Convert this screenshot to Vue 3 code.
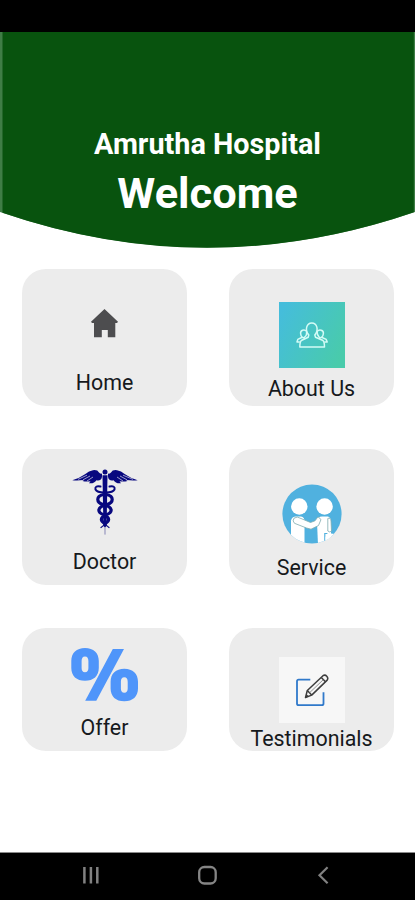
<script setup>
const items = [
  { id: 'home', label: 'Home' },
  { id: 'about', label: 'About Us' },
  { id: 'doctor', label: 'Doctor' },
  { id: 'service', label: 'Service' },
  { id: 'offer', label: 'Offer' },
  { id: 'testimonials', label: 'Testimonials' }
]
</script>

<template>
  <div class="screen">
    <div class="status"></div>
    <header class="hero">
      <svg class="hero-bg" viewBox="0 0 415 216" preserveAspectRatio="none">
        <path d="M0 0H415V180Q207.5 251 0 180Z" fill="#3f7d46" />
        <path d="M2.5 0H413.8V180.2Q207.5 251 2.5 180.7Z" fill="#08530e" />
      </svg>
      <p class="hospital">Amrutha Hospital</p>
      <h1 class="welcome">Welcome</h1>
    </header>

    <main class="grid">
      <button v-for="item in items" :key="item.id" class="card" :class="item.id">
        <svg v-if="item.id === 'home'" class="icon" viewBox="0 0 66 66">
          <path d="M32.5 19 46 31.7 45 33H43.3V47.2H35.8V40H29.8V47.2H22V33H20L19 31.7Z" fill="#4d4d4f" />
        </svg>

        <svg v-else-if="item.id === 'about'" class="icon" viewBox="0 0 66 66">
          <defs>
            <linearGradient id="teal" x1="0" y1="0.2" x2="1" y2="0.7">
              <stop offset="0" stop-color="#45bddb" />
              <stop offset="1" stop-color="#49cbab" />
            </linearGradient>
          </defs>
          <rect width="66" height="66" fill="url(#teal)" />
          <g fill="none" stroke="#d4fbf6" stroke-width="1.5" stroke-linejoin="round" stroke-linecap="round">
            <path d="M29.8 33C25.5 28 27.5 21 32.8 21S40 28 35.8 33L36.5 35.2 43.5 38.2Q45.5 39.5 45.5 45H20.8Q20.8 39.5 22.8 38.2L29.2 35.2Z" />
            <path d="M27.5 29.3C25.5 27 21.2 28 21.6 31.5Q21.8 34 23.2 35.3L18.8 37.4 18 40H20.3M23.4 35.2 25.5 36.4M27.6 30Q28.2 33 25.5 35.3" />
            <path d="M38.3 29.3C40.3 27 44.8 28 44.4 31.5Q44.2 34 42.6 35.3L47.2 37.4 48.2 40H45.8M42.6 35.2 40.3 36.4M38.2 30Q37.8 33 40.3 35.3" />
          </g>
        </svg>

        <svg v-else-if="item.id === 'doctor'" class="icon" viewBox="0 0 66 66">
          <g fill="#08087f">
            <path d="M30 7.5C30 10.5 27 12.3 24.5 11.2Q22 15 17 14.2L18.5 12.3Q14 13 10.5 12L12 11Q6 11.8 .3 11.3Q8 8.8 13 5.2Q17 1.8 21 1.2Q25.5.6 27 3.4Q28.5 5 30 4.6Z" />
            <path d="M36 7.5C36 10.5 39 12.3 41.5 11.2Q44 15 49 14.2L47.5 12.3Q52 13 55.5 12L54 11Q60 11.8 65.7 11.3Q58 8.8 53 5.2Q49 1.8 45 1.2Q40.5.6 39 3.4Q37.5 5 36 4.6Z" />
            <circle cx="33" cy="3" r="2.5" />
            <path d="M30.5 6.2H35.5L34.6 57 33 58.5 31.4 57Z" />
          </g>
          <g fill="none" stroke="#d9d9e6" stroke-width=".7">
            <path d="M6 10.4 15 6.2M11 10.8 18 7M15 12 21 8M61 10.4 51 6.2M55 10.8 48 7M51 12 45 8" />
          </g>
          <g fill="none" stroke="#08087f" stroke-linecap="round">
            <path stroke-width="2" d="M28.5 17.5Q22.5 16.5 23.5 20.5Q25 23.5 32 23.5M37.5 17.5Q43.5 16.5 42.5 20.5Q41 23.5 34 23.5" />
            <path stroke-width="3.2" d="M31.5 25.5C24 27 24 33.5 31 35.5C41 38 41.5 43 34 46C27 49 29 52.5 33 54.5M34.5 25.5C42 27 42 33.5 35 35.5C25 38 24.5 43 32 46C39 49 37 52.5 33 54.5" />
            <path stroke-width="1.3" d="M32.5 55Q31 57.3 29 58.5M33.5 55Q35 57.3 37 58.5" />
            <path stroke="#8585b5" stroke-width="1" d="M33 58.5V65.2" />
          </g>
        </svg>

        <svg v-else-if="item.id === 'service'" class="icon" viewBox="0 0 66 66">
          <defs><clipPath id="disc"><circle cx="33" cy="33" r="29.6" /></clipPath></defs>
          <circle cx="33" cy="33" r="29.6" fill="#50b1df" />
          <g clip-path="url(#disc)">
            <path d="M12 39.5Q13 35.5 17 35.5H22Q25.5 36 25.5 40V64H12Z" fill="#fff" />
            <path d="M38 41Q38.5 35.5 43 35.5H49Q52 36.5 52 41V64H39Z" fill="#fff" />
            <g fill="#fff" stroke="#7dabae" stroke-width=".8">
              <path d="M15 37.2Q18 34.8 22 37.5L31.5 41.5 36 39.8 39 35.8 42 38.5 39.5 44.5 32 48.2 27.5 47 15.5 42.3Q13 40 15 37.2Z" />
              <path d="M48.8 37.5Q51.5 36 52 40L52.5 50Q51 52 48.8 50Z" />
            </g>
            <path d="M48.4 52.5H45.8V63" fill="none" stroke="#50b1df" stroke-width="1.2" />
            <path d="M46.5 56Q48.5 51 56 53V62H46.5Z" fill="#fff" />
          </g>
          <circle cx="20.3" cy="25.5" r="8.2" fill="#fff" />
          <circle cx="45.6" cy="25.5" r="8.2" fill="#fff" />
        </svg>

        <svg v-else-if="item.id === 'offer'" class="icon" viewBox="0 0 66 66">
          <path fill="#4f95fa" fill-rule="evenodd" d="M13 6C21.5 6 26.8 11 26.8 19V26C26.8 34 21.5 38.8 13 38.8S-.7 34-.7 26V19C-.7 11 4.5 6 13 6ZM13 14.5C10.6 14.5 9.6 16.3 9.6 19V26C9.6 28.6 10.6 30.3 13 30.3S16.4 28.6 16.4 26V19C16.4 16.3 15.4 14.5 13 14.5Z" />
          <path fill="#4f95fa" fill-rule="evenodd" d="M52.3 26.8C60.8 26.8 66 31.8 66 39.8V46.5C66 54.5 60.8 59.3 52.3 59.3S38.6 54.5 38.6 46.5V39.8C38.6 31.8 43.8 26.8 52.3 26.8ZM52.3 35.3C49.9 35.3 48.9 37 48.9 39.7V46.5C48.9 49.1 49.9 50.8 52.3 50.8S55.7 49.1 55.7 46.5V39.7C55.7 37 54.7 35.3 52.3 35.3Z" />
          <path d="M40.8 7H52L24.3 58.8H13.2Z" fill="#4f95fa" />
        </svg>

        <svg v-else class="icon" viewBox="0 0 66 66">
          <rect width="66" height="66" fill="#f7f7f7" />
          <path d="M31.3 22.7H19.6Q18 22.7 18 24.3V46.5Q18 48.2 19.6 48.2H42.8Q44.5 48.2 44.5 46.5V35.3" fill="none" stroke="#3079ca" stroke-width="1.8" />
          <g fill="#f7f7f7" stroke="#3d3d3d" stroke-width="1.5" stroke-linejoin="round">
            <path d="M26.5 40.5 28.3 33.5 44 18.7Q46 17.3 47.8 19.2T48.2 23.1L32.7 38.1Z" />
            <path d="M28.3 33.5 32.7 38.1M42.3 20.4 46.5 24.8" fill="none" />
          </g>
          <path d="M30.5 35.8 44.2 22.8" stroke="#777" stroke-width=".8" />
          <path d="M26.5 40.5 27.4 37 30 39.5Z" fill="#3d3d3d" />
        </svg>
        <span class="label">{{ item.label }}</span>
      </button>
    </main>

    <nav class="navbar">
      <svg viewBox="0 0 20 20"><path d="M3.4 2V18.5M9.9 2V18.5M16.3 2V18.5" stroke="#818181" stroke-width="2.5" /></svg>
      <svg viewBox="0 0 20 20"><rect x="1.2" y="2" width="16.5" height="16.5" rx="5.2" fill="none" stroke="#858585" stroke-width="2.3" /></svg>
      <svg viewBox="0 0 20 20"><path d="M13.6 2.3 5.5 10.2 13.6 18.2" fill="none" stroke="#818181" stroke-width="2.2" /></svg>
    </nav>
  </div>
</template>

<style>
body { margin: 0; }
</style>

<style scoped>
.screen {
  width: 415px;
  height: 900px;
  display: flex;
  flex-direction: column;
  background: #fff;
  overflow: hidden;
  font-family: Roboto, "Liberation Sans", sans-serif;
}
.status { height: 32px; flex: none; background: #000; }
.hero {
  position: relative;
  height: 216px;
  flex: none;
  box-sizing: border-box;
  padding-top: 94px;
  text-align: center;
  color: #fff;
}
.hero-bg { position: absolute; inset: 0; width: 100%; height: 100%; }
.hospital {
  position: relative;
  margin: 0;
  font-size: 28.8px;
  line-height: 36px;
  font-weight: 700;
}
.welcome {
  position: relative;
  margin: 6px 0 0;
  font-size: 43.4px;
  line-height: 52px;
  font-weight: 700;
}
.grid {
  flex: 1;
  display: grid;
  grid-template-columns: 165px 165px;
  grid-template-rows: 136.5px 136.5px 123px;
  column-gap: 42px;
  row-gap: 43px;
  padding: 21px 21px 0 22px;
  align-content: start;
}
.card {
  display: flex;
  flex-direction: column;
  align-items: center;
  gap: 8px;
  border: 0;
  margin: 0;
  padding: 33px 0 0;
  border-radius: 24px;
  background: #ececec;
  font-family: inherit;
  color: #16191c;
}
.home { padding-top: 21px; gap: 14px; }
.service { padding-top: 32px; }
.doctor { padding-top: 20px; gap: 14px; }
.offer { padding-top: 14px; gap: 7px; }
.testimonials { padding-top: 29px; gap: 3px; }
.icon { width: 66px; height: 66px; flex: none; display: block; overflow: visible; }
.label { font-size: 21.4px; line-height: 26px; white-space: nowrap; }
.navbar {
  height: 48px;
  flex: none;
  box-sizing: border-box;
  border-top: 1px solid #8a8a8a;
  padding: 0 81px 3px;
  display: flex;
  justify-content: space-between;
  align-items: center;
  background: #000;
}
.navbar svg { width: 20px; height: 20px; }
</style>
